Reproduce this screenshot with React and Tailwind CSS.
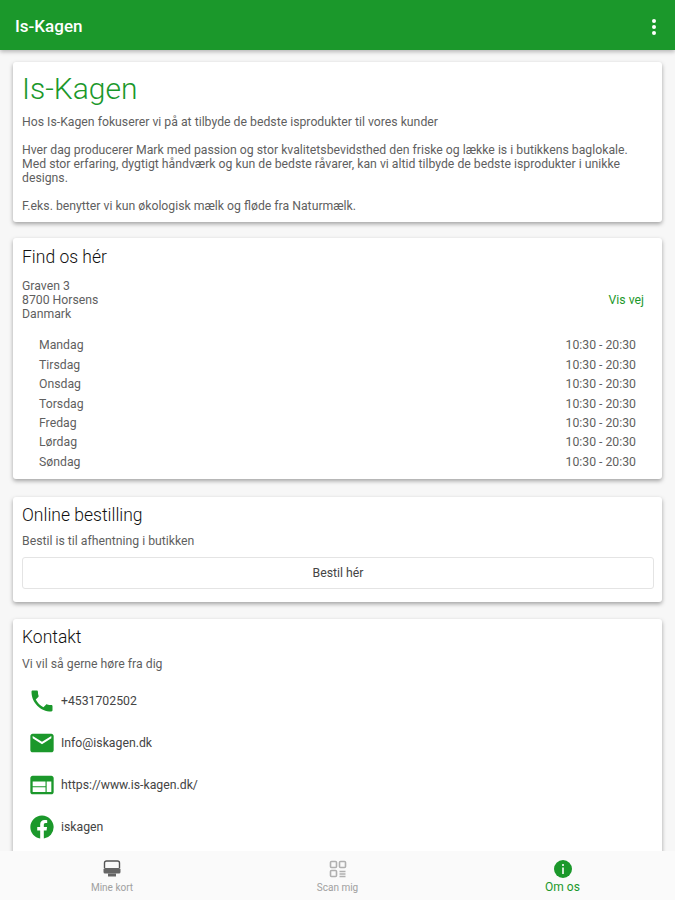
const GREEN = "#1b982b";

const hours = ["Mandag", "Tirsdag", "Onsdag", "Torsdag", "Fredag", "Lørdag", "Søndag"];

const contacts = [
  {
    text: "+4531702502",
    d: "M6.62 10.79c1.44 2.83 3.76 5.14 6.59 6.59l2.2-2.2c.27-.27.67-.36 1.02-.24 1.12.37 2.33.57 3.57.57.55 0 1 .45 1 1V20c0 .55-.45 1-1 1-9.39 0-17-7.61-17-17 0-.55.45-1 1-1h3.5c.55 0 1 .45 1 1 0 1.25.2 2.45.57 3.57.11.35.03.74-.25 1.02l-2.2 2.2z",
  },
  {
    text: "Info@iskagen.dk",
    d: "M20 4H4c-1.1 0-1.99.9-1.99 2L2 18c0 1.1.9 2 2 2h16c1.1 0 2-.9 2-2V6c0-1.1-.9-2-2-2zm0 4l-8 5-8-5V6l8 5 8-5v2z",
  },
  {
    text: "https://www.is-kagen.dk/",
    d: "M20 4H4c-1.1 0-1.99.9-1.99 2L2 18c0 1.1.9 2 2 2h16c1.1 0 2-.9 2-2V6c0-1.1-.9-2-2-2zm-5 14H4v-4h11v4zm0-5H4V9h11v4zm5 5h-4V9h4v9z",
  },
  {
    text: "iskagen",
    d: "M12 2.04c-5.5 0-10 4.49-10 10.02 0 5 3.66 9.15 8.44 9.9v-7H7.9v-2.9h2.54V9.85c0-2.51 1.49-3.89 3.78-3.89 1.09 0 2.23.19 2.23.19v2.47h-1.26c-1.24 0-1.63.77-1.63 1.56v1.88h2.78l-.45 2.9h-2.33v7a10 10 0 0 0 8.44-9.9c0-5.53-4.5-10.02-10-10.02z",
  },
];

function Card({ className, children }) {
  return (
    <section className={`mx-[13px] rounded-[3px] bg-white pl-[9px] pr-[8px] shadow-[0_2px_4px_rgba(0,0,0,0.35)] ${className}`}>
      {children}
    </section>
  );
}

function CardTitle({ children }) {
  return <h2 className="text-[17.5px] leading-[20px] font-light text-[#111]">{children}</h2>;
}

export default function App() {
  return (
    <div className="flex h-[900px] w-[675px] flex-col overflow-hidden bg-[#f7f7f7] font-['Roboto',sans-serif]">
      <header className="relative z-10 flex h-[50px] shrink-0 items-center justify-between bg-[#1b982b] pl-[15px] pr-[19px] pt-[3px] shadow-[0_2px_4px_rgba(0,0,0,0.25)]">
        <span className="text-[17px] font-medium text-white">Is-Kagen</span>
        <div className="flex flex-col gap-[2px]">
          <span className="size-[4px] rounded-full bg-white" />
          <span className="size-[4px] rounded-full bg-white" />
          <span className="size-[4px] rounded-full bg-white" />
        </div>
      </header>

      <main className="flex-1 overflow-hidden pt-[12px]">
        <Card className="h-[160px] pt-[9px]">
          <h1 className="text-[30px] leading-[35px] font-light text-[#1b982b]">Is-Kagen</h1>
          <p className="mt-[9px] text-[12.25px] leading-[14px] text-[#5f5f5f]">
            Hos Is-Kagen fokuserer vi på at tilbyde de bedste isprodukter til vores kunder
          </p>
          <p className="mt-[14px] text-[12.25px] leading-[14px] text-[#5f5f5f]">
            Hver dag producerer Mark med passion og stor kvalitetsbevidsthed den friske og lække is i butikkens baglokale.
            <br />
            Med stor erfaring, dygtigt håndværk og kun de bedste råvarer, kan vi altid tilbyde de bedste isprodukter i unikke designs.
          </p>
          <p className="mt-[14px] text-[12.25px] leading-[14px] text-[#5f5f5f]">
            F.eks. benytter vi kun økologisk mælk og fløde fra Naturmælk.
          </p>
        </Card>

        <Card className="mt-[16px] h-[241px] pt-[9px]">
          <CardTitle>Find os hér</CardTitle>
          <div className="mt-[12px] flex items-center justify-between pr-[10px] text-[12.25px] leading-[14px] text-[#5f5f5f]">
            <div>
              <div>Graven 3</div>
              <div>8700 Horsens</div>
              <div>Danmark</div>
            </div>
            <span className="text-[#1b982b]">Vis vej</span>
          </div>
          <div className="mt-[15px] pl-[17px] pr-[18px]">
            {hours.map((day) => (
              <div key={day} className="flex h-[19.35px] items-center justify-between text-[12.25px] text-[#5f5f5f]">
                <span>{day}</span>
                <span>10:30 - 20:30</span>
              </div>
            ))}
          </div>
        </Card>

        <Card className="mt-[18px] h-[105px] pt-[8px]">
          <CardTitle>Online bestilling</CardTitle>
          <p className="mt-[9px] text-[12.25px] leading-[14px] text-[#5f5f5f]">Bestil is til afhentning i butikken</p>
          <button className="mt-[9px] h-[32px] w-full rounded-[3px] border border-[#e4e4e4] bg-white text-[12.25px] text-[#444]">
            Bestil hér
          </button>
        </Card>

        <Card className="mt-[17px] h-[300px] pt-[8px]">
          <CardTitle>Kontakt</CardTitle>
          <p className="mt-[10px] text-[12.25px] leading-[14px] text-[#5f5f5f]">Vi vil så gerne høre fra dig</p>
          <ul className="mt-[9px] pl-[6px]">
            {contacts.map((c) => (
              <li key={c.text} className="flex h-[42px] items-center gap-[5px]">
                <svg viewBox="0 0 24 24" className="size-[28px]" fill={GREEN}>
                  <path d={c.d} />
                </svg>
                <span className="text-[12.25px] text-[#444]">{c.text}</span>
              </li>
            ))}
          </ul>
        </Card>
      </main>

      <nav className="relative z-10 grid h-[49px] shrink-0 grid-cols-3 bg-[#fafafa]">
        <div className="flex flex-col items-center pr-[1px] pt-[8px]">
          <svg viewBox="0 0 20 20" className="size-[20px]" fill="none">
            <path d="M2.5 9V4a2 2 0 0 1 2-2h11a2 2 0 0 1 2 2v5" stroke="#555" strokeWidth="1.4" />
            <rect x="1.5" y="9" width="17" height="5.5" rx="1.5" fill="#666" />
            <rect x="6" y="14.5" width="8" height="3" fill="#666" />
          </svg>
          <span className="mt-[3px] text-[10px] leading-[12px] text-[#a0a0a0]">Mine kort</span>
        </div>
        <div className="flex flex-col items-center pt-[8px]">
          <svg viewBox="0 0 20 20" className="size-[20px]" fill="none" stroke="#b0b0b0" strokeWidth="1.6">
            <rect x="2.5" y="2.5" width="6" height="6" rx="1" />
            <rect x="11.5" y="2.5" width="6" height="6" rx="1" />
            <rect x="2.5" y="11.5" width="6" height="6" rx="1" />
            <path d="M11.5 12.5h6M11.5 15h6M11.5 17.5h6" />
          </svg>
          <span className="mt-[3px] text-[10px] leading-[12px] text-[#a0a0a0]">Scan mig</span>
        </div>
        <div className="flex flex-col items-center pt-[8px]">
          <svg viewBox="0 0 20 20" className="size-[20px]">
            <circle cx="10" cy="10" r="9" fill={GREEN} />
            <rect x="9" y="8.5" width="2" height="6.5" fill="#cfe8d2" />
            <rect x="9" y="5" width="2" height="2" fill="#cfe8d2" />
          </svg>
          <span className="mt-[2px] text-[12px] leading-[12px] text-[#1b982b]">Om os</span>
        </div>
      </nav>
    </div>
  );
}
